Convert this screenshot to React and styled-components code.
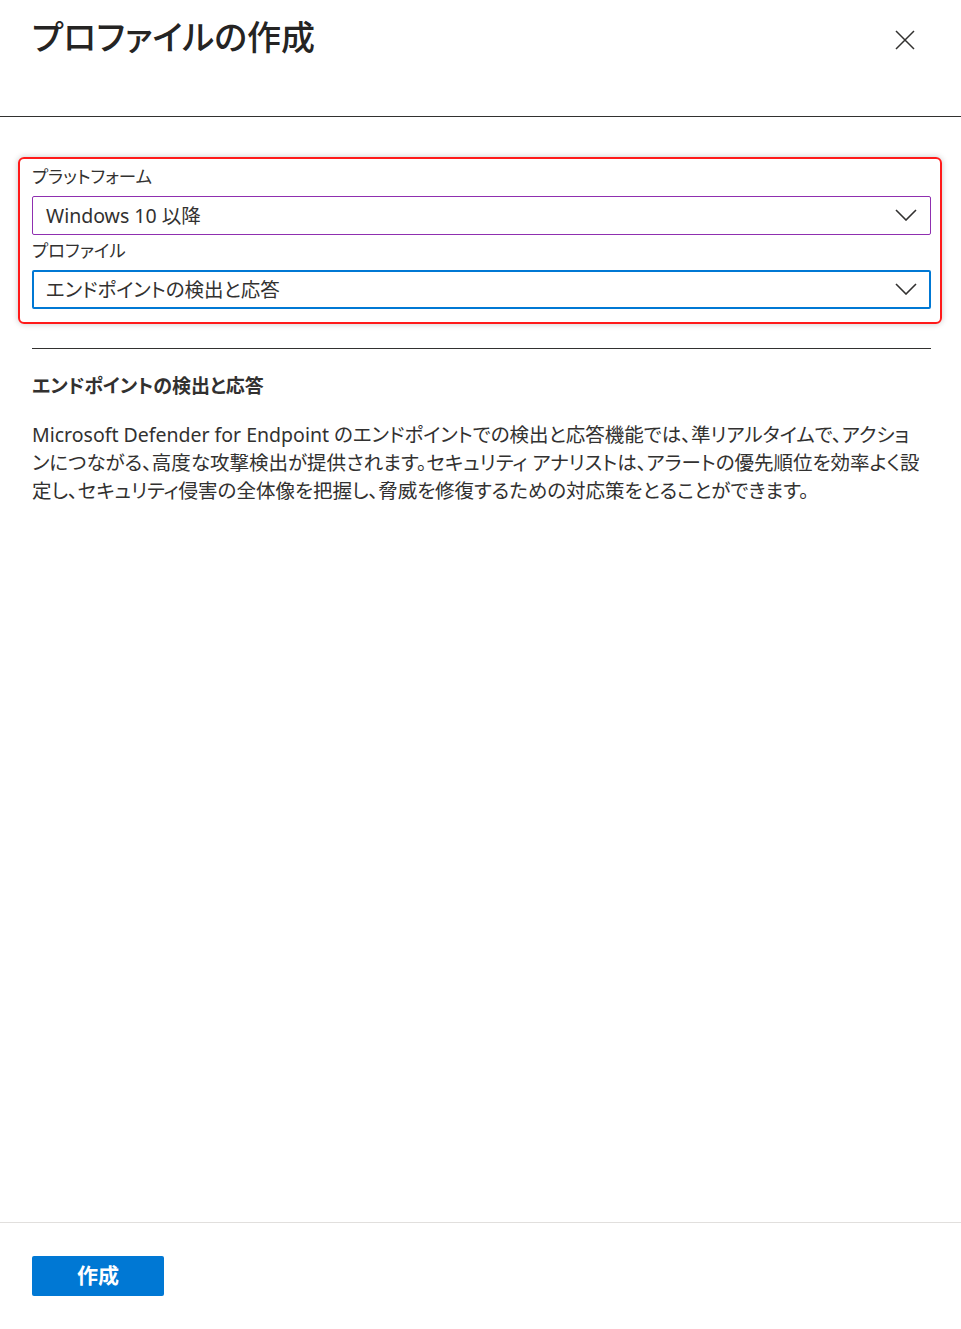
import React from "react";
import styled, { createGlobalStyle } from "styled-components";

const GlobalStyle = createGlobalStyle`
  html, body {
    margin: 0;
    padding: 0;
    background: #ffffff;
  }
  body {
    font-family: "Noto Sans", "Noto Sans CJK JP", sans-serif;
    color: #323130;
    font-feature-settings: "palt";
  }
`;

const Page = styled.div`
  min-height: 100vh;
  display: flex;
  flex-direction: column;
`;

const Header = styled.header`
  height: 116px;
  display: flex;
  justify-content: space-between;
  align-items: flex-start;
  padding: 0 46px 0 32px;
  border-bottom: 1px solid #323130;
`;

const Title = styled.h1`
  margin: 0;
  padding-top: 16px;
  font-size: 34px;
  line-height: 42px;
  font-weight: 500;
  color: #252423;
`;

const CloseButton = styled.button`
  margin-top: 30px;
  width: 20px;
  height: 20px;
  padding: 0;
  border: none;
  background: none;
  display: flex;
  cursor: pointer;
`;

const Body = styled.main`
  flex: 1;
  padding: 40px 30px 0 32px;
`;

const Highlight = styled.section`
  margin: 0 -11px 0 -14px;
  padding: 2px 9px 13px 12px;
  border: 2px solid #ff1a1a;
  border-radius: 6px;
  box-shadow: 0 0 6px rgba(0, 0, 0, 0.22);
`;

const Label = styled.div`
  font-size: 17.5px;
  line-height: 30px;
  margin-bottom: ${(props) => props.gap}px;
`;

const Select = styled.div`
  box-sizing: border-box;
  height: 39px;
  display: flex;
  align-items: center;
  justify-content: space-between;
  border: ${(props) => (props.focused ? "2px solid #0078d4" : "1px solid #8f2fb0")};
  border-radius: 2px;
  padding: 0 ${(props) => (props.focused ? 12 : 13)}px 2px
    ${(props) => (props.focused ? 12 : 13)}px;
  font-size: 19.5px;
`;

const Divider = styled.hr`
  margin: 24px 0 0;
  border: none;
  border-top: 1px solid #323130;
`;

const Heading = styled.h2`
  margin: 23px 0 0;
  font-size: 19px;
  line-height: 28px;
  font-weight: 700;
`;

const Paragraph = styled.p`
  margin: 21px 0 0;
  font-size: 19.5px;
  line-height: 28px;
  white-space: nowrap;
`;

const Footer = styled.footer`
  border-top: 1px solid #e1dfdd;
  padding: 33px 32px;
`;

const PrimaryButton = styled.button`
  width: 132px;
  height: 40px;
  padding: 0 0 4px;
  border: none;
  border-radius: 2px;
  background: #0078d4;
  color: #ffffff;
  font-family: inherit;
  font-size: 21px;
  font-weight: 700;
  cursor: pointer;
`;

const Chevron = () => (
  <svg width="22" height="12" viewBox="0 0 22 12">
    <path d="M1 1 L11 11 L21 1" fill="none" stroke="#323130" strokeWidth="1.6" />
  </svg>
);

const CloseIcon = () => (
  <svg width="20" height="20" viewBox="0 0 20 20">
    <path d="M1 1 L19 19 M19 1 L1 19" fill="none" stroke="#323130" strokeWidth="1.5" />
  </svg>
);

const App = () => {
  return (
    <Page>
      <GlobalStyle />
      <Header>
        <Title>プロファイルの作成</Title>
        <CloseButton aria-label="閉じる">
          <CloseIcon />
        </CloseButton>
      </Header>

      <Body>
        <Highlight>
          <Label gap={5}>プラットフォーム</Label>
          <Select>
            <span>Windows 10 以降</span>
            <Chevron />
          </Select>
          <Label gap={5}>プロファイル</Label>
          <Select focused>
            <span>エンドポイントの検出と応答</span>
            <Chevron />
          </Select>
        </Highlight>

        <Divider />
        <Heading>エンドポイントの検出と応答</Heading>
        <Paragraph>
          Microsoft Defender for Endpoint のエンドポイントでの検出と応答機能では、準リアルタイムで、アクショ
          <br />
          ンにつながる、高度な攻撃検出が提供されます。セキュリティ アナリストは、アラートの優先順位を効率よく設
          <br />
          定し、セキュリティ侵害の全体像を把握し、脅威を修復するための対応策をとることができます。
        </Paragraph>
      </Body>

      <Footer>
        <PrimaryButton>作成</PrimaryButton>
      </Footer>
    </Page>
  );
};

export default App;
